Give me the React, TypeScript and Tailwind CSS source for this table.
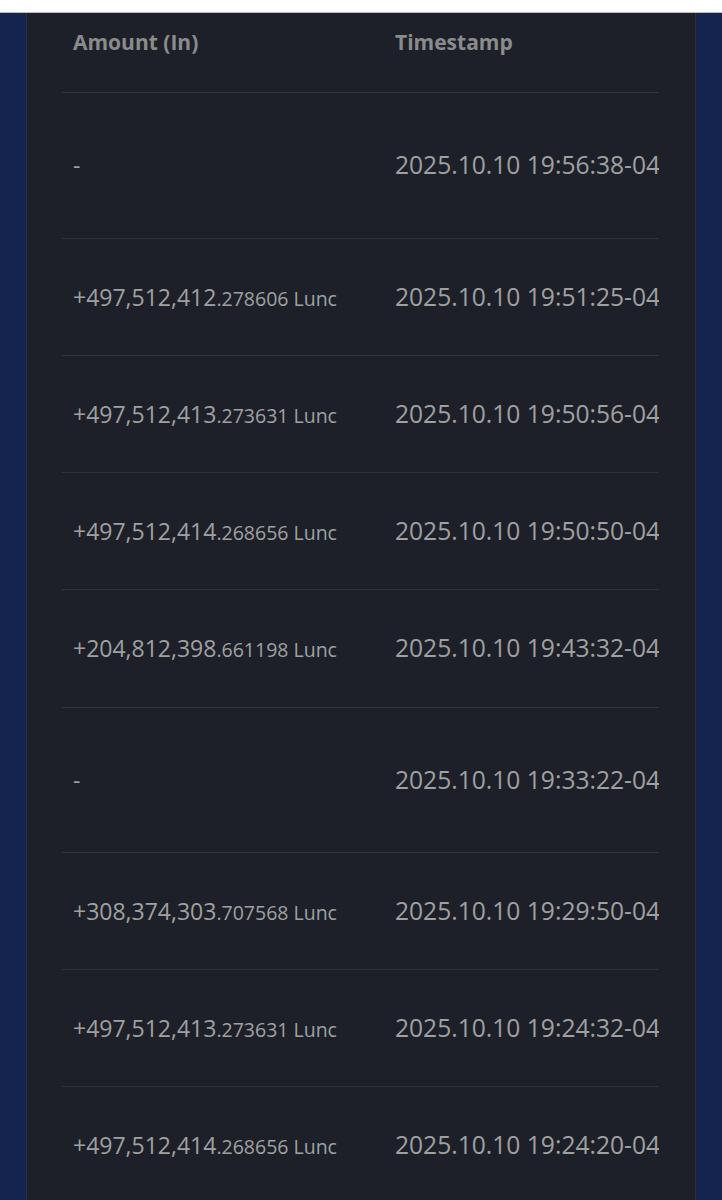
const rows: { whole: string | null; frac?: string; ts: string; h: string }[] = [
  { whole: null, ts: "2025.10.10 19:56:38-04:00", h: "h-[146px]" },
  { whole: "+497,512,412", frac: ".278606", ts: "2025.10.10 19:51:25-04:00", h: "h-[117px]" },
  { whole: "+497,512,413", frac: ".273631", ts: "2025.10.10 19:50:56-04:00", h: "h-[117px]" },
  { whole: "+497,512,414", frac: ".268656", ts: "2025.10.10 19:50:50-04:00", h: "h-[117px]" },
  { whole: "+204,812,398", frac: ".661198", ts: "2025.10.10 19:43:32-04:00", h: "h-[118px]" },
  { whole: null, ts: "2025.10.10 19:33:22-04:00", h: "h-[145px]" },
  { whole: "+308,374,303", frac: ".707568", ts: "2025.10.10 19:29:50-04:00", h: "h-[117px]" },
  { whole: "+497,512,413", frac: ".273631", ts: "2025.10.10 19:24:32-04:00", h: "h-[117px]" },
  { whole: "+497,512,414", frac: ".268656", ts: "2025.10.10 19:24:20-04:00", h: "h-[117px]" },
];

export default function App() {
  return (
    <div className="min-h-screen w-full bg-[#15244f] font-['Open_Sans',sans-serif]">
      <div className="h-[13px] bg-white border-b border-[#bdbdbd]" />
      <div className="px-[26px]">
        <div className="min-h-[1187px] bg-[#1d2029] border-x border-[#2c303b] pl-[35px] pr-[36px]">
          <div className="overflow-hidden">
            <div className="grid grid-cols-[322px_1fr] h-[79px] pt-[17px] text-[21px] font-bold text-[#8b8b8b] leading-[24px] whitespace-nowrap">
              <div className="px-[11px]">Amount (In)</div>
              <div className="px-[11px]">Timestamp</div>
            </div>
            {rows.map((r, i) => (
              <div
                key={i}
                className={`grid grid-cols-[322px_1fr] items-center border-t border-[#30333c] whitespace-nowrap text-[#a0a0a0] ${r.h}`}
              >
                <div className="px-[11px]">
                  {r.whole ? (
                    <span className="text-[23px]">
                      {r.whole}
                      <span className="text-[19.5px]">{r.frac} Lunc</span>
                    </span>
                  ) : (
                    <span className="text-[23px]">-</span>
                  )}
                </div>
                <div className="px-[11px] text-[24.6px]">{r.ts}</div>
              </div>
            ))}
          </div>
        </div>
      </div>
    </div>
  );
}
